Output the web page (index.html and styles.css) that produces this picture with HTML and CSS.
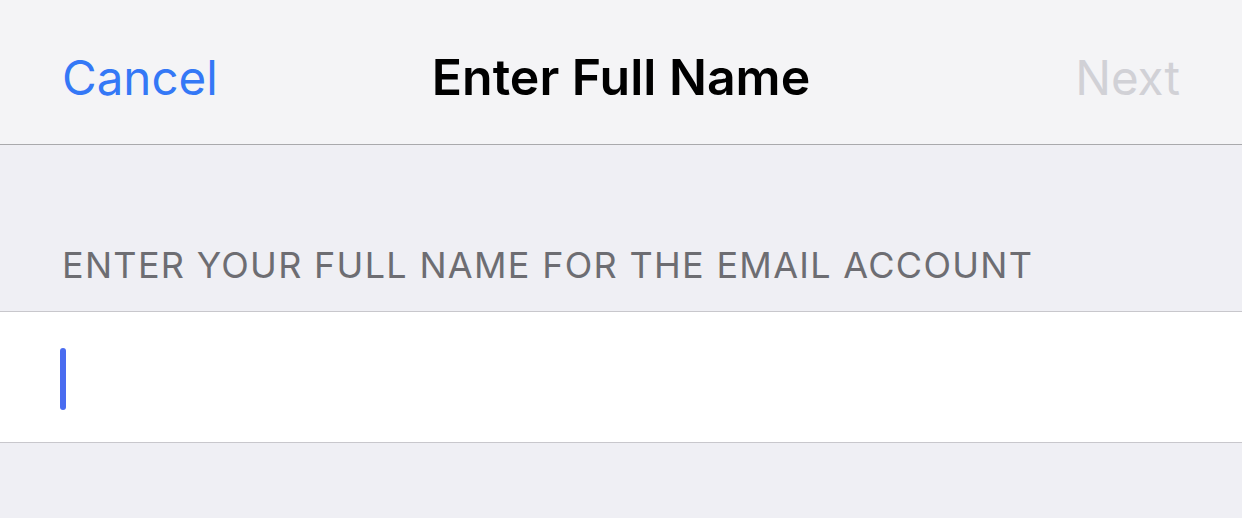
FILE: index.html
```html
<!DOCTYPE html>
<html lang="en">
<head>
  <meta charset="UTF-8">
  <meta name="viewport" content="width=device-width, initial-scale=1.0">
  <title>Enter Full Name</title>
  <link rel="stylesheet" href="styles.css">
</head>
<body>
  <div class="navbar">
    <span class="nav-btn cancel">Cancel</span>
    <span class="nav-title">Enter Full Name</span>
    <span class="nav-btn next">Next</span>
  </div>

  <div class="section">
    <div class="section-header">ENTER YOUR FULL NAME FOR THE EMAIL ACCOUNT</div>
    <div class="field">
      <span class="caret"></span>
    </div>
  </div>
</body>
</html>
```

FILE: styles.css
```css
body {
  margin: 0;
  background-color: #efeff4;
  font-family: Inter, "Liberation Sans", sans-serif;
  height: 518px;
  overflow: hidden;
}
.navbar {
  height: 145px;
  box-sizing: border-box;
  background-color: #f4f4f6;
  border-bottom: 1px solid #a9a9ac;
  display: flex;
  align-items: center;
  justify-content: space-between;
  padding: 10px 62px 0 62px;
  position: relative;
}
.nav-btn {
  font-size: 47.5px;
}
.cancel {
  color: #3478f6;
}
.next {
  color: #d1d1d6;
}
.nav-title {
  font-size: 50px;
  font-weight: 600;
  color: #000;
  position: absolute; /* タイトルは中央固定 */
  left: 0;
  right: 0;
  top: 10px;
  bottom: 0;
  display: flex;
  align-items: center;
  justify-content: center;
  pointer-events: none;
}
.section {
  padding-top: 98px;
}
.section-header {
  font-size: 36px;
  color: #6d6d72;
  letter-spacing: 1.3px;
  padding: 0 62px 24px;
  line-height: 44px;
}
.field {
  background-color: #fff;
  border-top: 1px solid #c8c7cc;
  border-bottom: 1px solid #c8c7cc;
  height: 130px;
  display: flex;
  align-items: center;
  padding-left: 60px;
}
.caret {
  width: 6px;
  height: 62px;
  margin-top: 3px;
  border-radius: 3px;
  background-color: #4a6cf0;
}
```
